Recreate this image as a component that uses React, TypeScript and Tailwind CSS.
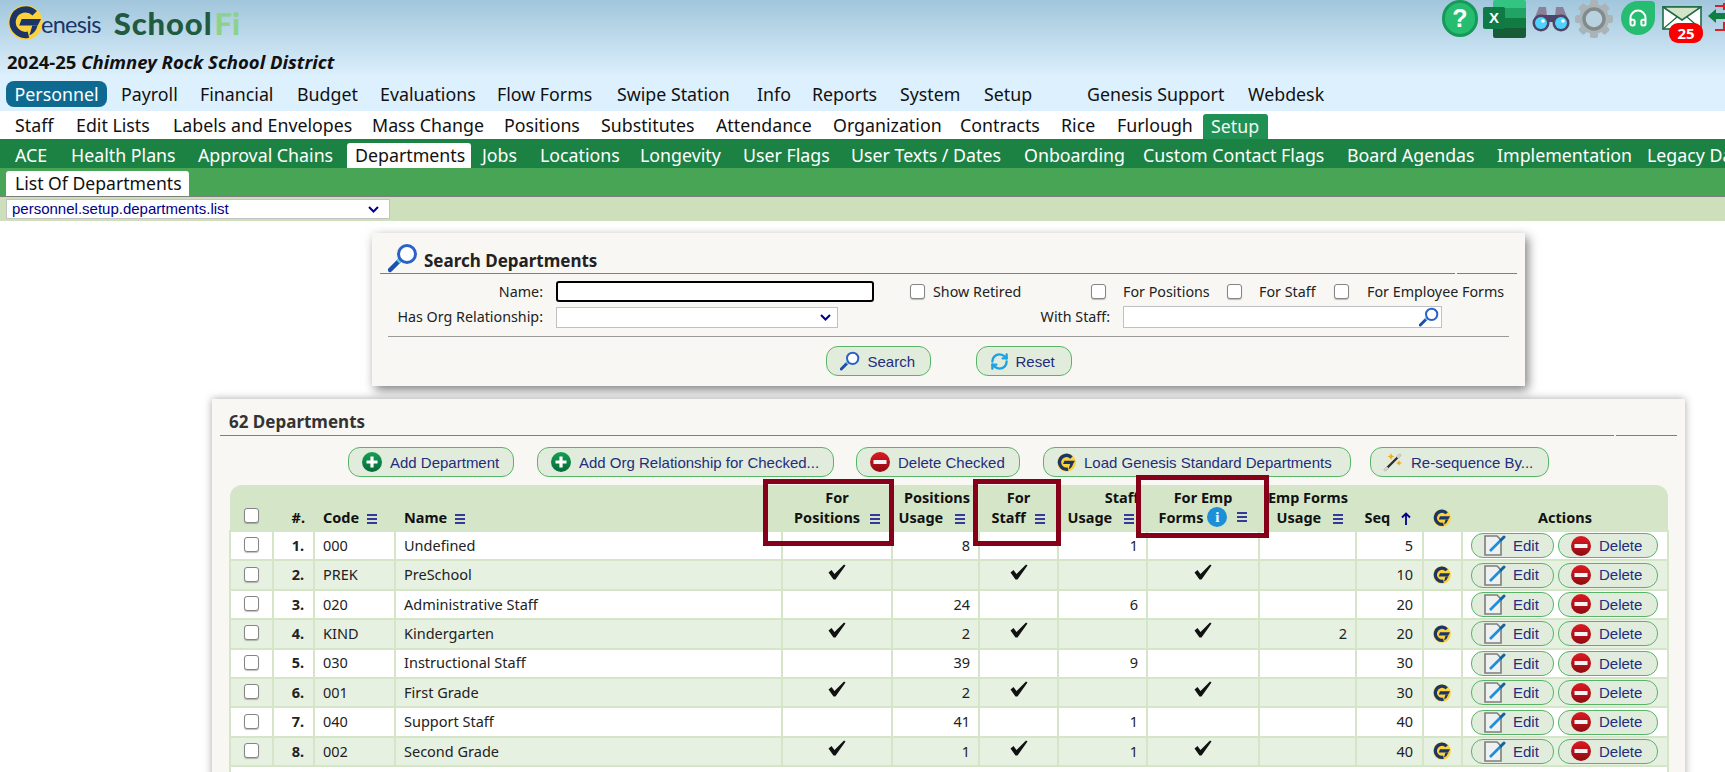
import React from "react";
import { Headphones, RefreshCw } from "lucide-react";

const mainNav = [
    { label: "Payroll", cls: "w-[79px]" },
    { label: "Financial", cls: "w-[97px]" },
    { label: "Budget", cls: "w-[83px]" },
    { label: "Evaluations", cls: "w-[117px]" },
    { label: "Flow Forms", cls: "w-[120px]" },
    { label: "Swipe Station", cls: "w-[140px]" },
    { label: "Info", cls: "w-[55px]" },
    { label: "Reports", cls: "w-[88px]" },
    { label: "System", cls: "w-[84px]" },
    { label: "Setup", cls: "w-[103px]" },
    { label: "Genesis Support", cls: "w-[161px]" },
    { label: "Webdesk", cls: "w-[90px]" },
];

const subNav = [
    { label: "Staff", cls: "w-[61px]" },
    { label: "Edit Lists", cls: "w-[97px]" },
    { label: "Labels and Envelopes", cls: "w-[199px]" },
    { label: "Mass Change", cls: "w-[132px]" },
    { label: "Positions", cls: "w-[97px]" },
    { label: "Substitutes", cls: "w-[115px]" },
    { label: "Attendance", cls: "w-[117px]" },
    { label: "Organization", cls: "w-[127px]" },
    { label: "Contracts", cls: "w-[101px]" },
    { label: "Rice", cls: "w-[56px]" },
    { label: "Furlough", cls: "w-[86px]" },
];

const setupNavLeft = [
    { label: "ACE", cls: "w-[56px]" },
    { label: "Health Plans", cls: "w-[127px]" },
    { label: "Approval Chains", cls: "w-[149px]" },
];

const setupNavRight = [
    { label: "Jobs", cls: "w-[58px]" },
    { label: "Locations", cls: "w-[100px]" },
    { label: "Longevity", cls: "w-[103px]" },
    { label: "User Flags", cls: "w-[108px]" },
    { label: "User Texts / Dates", cls: "w-[173px]" },
    { label: "Onboarding", cls: "w-[119px]" },
    { label: "Custom Contact Flags", cls: "w-[204px]" },
    { label: "Board Agendas", cls: "w-[150px]" },
    { label: "Implementation", cls: "w-[150px]" },
    { label: "Legacy Data", cls: "w-[100px]" },
];

const rows = [
    { n: "1.", code: "000", name: "Undefined", pos: "8", staff: "1", emp: "", seq: "5", std: false },
    { n: "2.", code: "PREK", name: "PreSchool", pos: "", staff: "", emp: "", seq: "10", std: true },
    { n: "3.", code: "020", name: "Administrative Staff", pos: "24", staff: "6", emp: "", seq: "20", std: false },
    { n: "4.", code: "KIND", name: "Kindergarten", pos: "2", staff: "", emp: "2", seq: "20", std: true },
    { n: "5.", code: "030", name: "Instructional Staff", pos: "39", staff: "9", emp: "", seq: "30", std: false },
    { n: "6.", code: "001", name: "First Grade", pos: "2", staff: "", emp: "", seq: "30", std: true },
    { n: "7.", code: "040", name: "Support Staff", pos: "41", staff: "1", emp: "", seq: "40", std: false },
    { n: "8.", code: "002", name: "Second Grade", pos: "1", staff: "1", emp: "", seq: "40", std: true },
];

const GLogo = ({ size }: { size: number }) => (
    <svg width={size} height={size} viewBox="0 0 36 36" className="shrink-0">
        <circle cx="18" cy="18" r="17.7" fill="#fbd13c" />
        <path d="M27.5 8.5 A13.2 13.2 0 1 0 21 30.5" fill="none" stroke="#1a3566" strokeWidth="6.4" />
        <path d="M14 14.5 H34 L30.5 21 H11.5 Z" fill="#1a3566" />
        <path d="M30.5 21 Q28.5 28.5 22 31 L25 21 Z" fill="#1a3566" />
    </svg>
);

const MagnifyIcon = ({ size }: { size: number }) => (
    <svg width={size} height={size} viewBox="0 0 30 30" className="shrink-0">
        <path d="M2 27 L11 18" stroke="#1d4fb0" strokeWidth="4.5" strokeLinecap="round" />
        <path d="M10 19 L13 16" stroke="#5fd0e0" strokeWidth="4" />
        <circle cx="19" cy="11" r="8.5" fill="#ffffff" stroke="#2a62c9" strokeWidth="3" />
    </svg>
);

const PlusIcon = () => (
    <svg width="20" height="20" viewBox="0 0 20 20" className="shrink-0">
        <defs>
            <linearGradient id="plusFill" x1="0" y1="0" x2="0" y2="1">
                <stop offset="0" stopColor="#14a052" />
                <stop offset="1" stopColor="#05693a" />
            </linearGradient>
        </defs>
        <circle cx="10" cy="10" r="10" fill="url(#plusFill)" />
        <path d="M10 4.5 V15.5 M4.5 10 H15.5" stroke="#ffffff" strokeWidth="3.2" />
    </svg>
);

const DeleteIcon = () => (
    <svg width="20" height="20" viewBox="0 0 20 20" className="shrink-0">
        <defs>
            <linearGradient id="deleteFill" x1="0" y1="0" x2="0" y2="1">
                <stop offset="0" stopColor="#dc1a22" />
                <stop offset="1" stopColor="#8f0a12" />
            </linearGradient>
        </defs>
        <circle cx="10" cy="10" r="10" fill="url(#deleteFill)" />
        <rect x="3.5" y="8" width="13" height="4" fill="#f3f3f3" />
    </svg>
);

const EditIcon = () => (
    <svg width="24" height="21" viewBox="0 0 24 21" className="shrink-0">
        <path d="M1 1 H13 L17 5 V20 H1 Z" fill="#eef1f0" stroke="#7d7d7d" strokeWidth="1.6" />
        <path d="M6 16 L17 5" stroke="#1b8fdc" strokeWidth="2.6" />
        <path d="M17 5 L20 2" stroke="#15639c" strokeWidth="3" strokeLinecap="round" />
    </svg>
);

const WandIcon = () => (
    <svg width="21" height="20" viewBox="0 0 21 20" className="shrink-0">
        <path d="M2 18 L17 3" stroke="#2e2e2e" strokeWidth="2.4" strokeLinecap="round" />
        <path d="M2 18 L4 16 M15 5 L17 3" stroke="#d8d8d8" strokeWidth="2.4" strokeLinecap="round" />
        <path d="M8 1 L9 3.5 L11.5 4.5 L9 5.5 L8 8 L7 5.5 L4.5 4.5 L7 3.5 Z" fill="#f6a821" />
        <path d="M16 8 L16.8 10 L19 11 L16.8 12 L16 14 L15.2 12 L13 11 L15.2 10 Z" fill="#f6a821" />
    </svg>
);

const MenuBars = () => (
    <svg width="10" height="10" viewBox="0 0 10 10" className="inline-block shrink-0 align-[-1px]">
        <path d="M0 1 H10 M0 5 H10 M0 9 H10" stroke="#00008b" strokeWidth="1.7" />
    </svg>
);

const SortArrow = () => (
    <svg width="10" height="13" viewBox="0 0 10 13" className="inline-block align-[-2px]">
        <path d="M5 13 V2 M1 5.5 L5 1.5 L9 5.5" fill="none" stroke="#00008b" strokeWidth="1.8" />
    </svg>
);

const Checkbox = () => (
    <input
        type="checkbox"
        className="appearance-none w-[15px] h-[15px] bg-white border border-[#858585] rounded-[3px] block shrink-0 shadow-[0_1px_1px_rgba(0,0,0,0.25)]"
    />
);

const Check = () => (
    <svg width="18" height="16" viewBox="0 0 18 16" className="inline-block align-[1px]">
        <path d="M0.5 8.5 L3.5 6 L6.5 10 L16 0.5 L17.5 1.5 L7.5 15.5 L5.5 15.5 Z" fill="#111" />
    </svg>
);

const ActionButton = ({ icon, label, cls }: { icon: React.ReactNode; label: string; cls: string }) => (
    <button
        className={`flex items-center h-[30px] bg-[#e2ecdc] border border-[#58b568] rounded-[12px] font-['Liberation_Sans',Arial,sans-serif] text-[15px] text-[#222d7c] whitespace-nowrap ${cls}`}
    >
        {icon}
        <span className="pt-[2px]">{label}</span>
    </button>
);

const RowButton = ({ icon, label, cls }: { icon: React.ReactNode; label: string; cls: string }) => (
    <button
        className={`flex items-center h-[25px] bg-[#e2ecdc] border border-[#58b568] rounded-[12px] font-['Liberation_Sans',Arial,sans-serif] text-[15px] text-[#222d7c] ${cls}`}
    >
        {icon}
        <span className="pt-[1px]">{label}</span>
    </button>
);

const TopIcons = () => (
    <div className="ml-auto w-[283px] h-[48px] flex items-start overflow-hidden shrink-0">
        <div className="w-[36px] h-[37px] rounded-full bg-[#27bd70] border-[3px] border-[#179a59] flex items-center justify-center text-white text-[25px] font-bold font-['Liberation_Sans',sans-serif] shrink-0">
            ?
        </div>
        <div className="relative ml-[5px] w-[44px] h-[38px] shrink-0">
            <div className="absolute left-[10px] top-0 w-[33px] h-[38px] rounded-[2px] overflow-hidden flex flex-col">
                <div className="h-[8px] bg-[#33c481]" />
                <div className="h-[10px] bg-[#21a366]" />
                <div className="h-[10px] bg-[#107c41]" />
                <div className="h-[10px] bg-[#185c37]" />
            </div>
            <div className="absolute left-0 top-[7px] w-[22px] h-[22px] rounded-[2px] bg-[#0f7a45] text-white text-[15px] font-bold flex items-center justify-center font-['Liberation_Sans',sans-serif]">
                X
            </div>
        </div>
        <svg width="40" height="26" viewBox="0 0 40 26" className="ml-[4px] mt-[6px] shrink-0">
            <path d="M8 1 H15 L16 10 H24 L25 1 H32 L38 16 H2 Z" fill="#8a8098" />
            <rect x="13" y="9" width="14" height="7" fill="#4d4566" />
            <circle cx="10" cy="17" r="8.5" fill="#4d4566" />
            <circle cx="30" cy="17" r="8.5" fill="#4d4566" />
            <circle cx="10" cy="17" r="6" fill="#4fd2ff" />
            <circle cx="30" cy="17" r="6" fill="#4fd2ff" />
            <circle cx="12" cy="15" r="1.8" fill="#ffffff" />
            <circle cx="32" cy="15" r="1.8" fill="#ffffff" />
        </svg>
        <svg width="40" height="38" viewBox="0 0 40 38" className="ml-[3px] shrink-0">
            <g fill="#aab4b8">
                <circle cx="20" cy="19" r="15" />
                <rect x="16" y="0" width="8" height="38" rx="2" />
                <rect x="1" y="15" width="38" height="8" rx="2" />
                <rect x="16" y="0" width="8" height="38" rx="2" transform="rotate(45 20 19)" />
                <rect x="16" y="0" width="8" height="38" rx="2" transform="rotate(-45 20 19)" />
            </g>
            <circle cx="20" cy="19" r="10" fill="#b9d2e0" />
            <circle cx="20" cy="19" r="10" fill="none" stroke="#84898a" strokeWidth="3.4" />
        </svg>
        <div className="ml-[7px] mt-[1px] w-[34px] h-[34px] bg-[#26bd73] rounded-[17px] rounded-tr-[4px] flex items-center justify-center shrink-0">
            <Headphones size={20} color="#ffffff" strokeWidth={2.4} />
        </div>
        <div className="relative ml-[7px] w-[41px] h-[44px] shrink-0">
            <svg width="40" height="24" viewBox="0 0 40 24" className="mt-[6px]">
                <rect x="1" y="1" width="38" height="22" fill="#ffffff" stroke="#1f6b46" strokeWidth="1.6" />
                <path d="M1 1 L20 14 L39 1 Z" fill="#d3e5c6" stroke="#1f6b46" strokeWidth="1.6" />
                <path d="M1 23 L15 11 M39 23 L25 11" stroke="#1f6b46" strokeWidth="1.2" />
            </svg>
            <div className="absolute left-[7px] top-[23px] w-[34px] h-[20px] bg-[#f80000] rounded-[9px] text-white text-[15px] font-bold leading-[20px] text-center">
                25
            </div>
        </div>
        <svg width="24" height="32" viewBox="0 0 24 32" className="ml-[4px] shrink-0">
            <path d="M8 6 H18 M8 30 H18 M17 3 V10 M17 22 V30" fill="none" stroke="#d9202a" strokeWidth="2" />
            <path d="M1 16 L9 9 V13 H20 V19 H9 V23 Z" fill="#0e7f41" />
        </svg>
    </div>
);

const Header = () => (
    <div>
        <div className="h-[111px] bg-linear-to-b from-[#a1c6db] to-[#ddf0fd] to-[70%] flex flex-col">
            <div className="h-[50px] flex items-start">
                <div className="flex items-center pl-[8px] pt-[5px]">
                    <GLogo size={35} />
                    <span className="text-[23.5px] text-[#1b3566] leading-none tracking-[-0.7px] ml-[-2px] mt-[5px] font-['Lato',sans-serif]">enesis</span>
                    <span className="ml-[13px] mt-[2px] text-[31px] font-black leading-none text-[#1f5a41] tracking-[0.9px] font-['Lato',sans-serif]">School</span>
                    <span className="ml-[2px] mt-[2px] text-[31px] font-black leading-none text-[#8bd28b] font-['Lato',sans-serif]">Fi</span>
                </div>
                <TopIcons />
            </div>
            <div className="h-[31px] pl-[7px] text-[18.5px] font-bold leading-[24px] text-[#111] whitespace-nowrap">
                2024-25 <span className="italic">Chimney Rock School District</span>
            </div>
            <div className="flex items-center pl-[6px] h-[26px] text-[17.8px] text-[#111] whitespace-nowrap">
                <div className="w-[101px] h-[26px] mr-[14px] bg-[#0f6a92] text-white rounded-[8px] flex items-center justify-center">
                    Personnel
                </div>
                {mainNav.map((item) => (
                    <div key={item.label} className={item.cls}>{item.label}</div>
                ))}
            </div>
        </div>
        <div className="h-[28px] bg-white flex items-end pl-[15px] text-[17.8px] text-[#111] whitespace-nowrap">
            {subNav.map((item) => (
                <div key={item.label} className={`${item.cls} h-[25px] leading-[25px] mb-[1px]`}>{item.label}</div>
            ))}
            <div className="w-[65px] h-[25px] pl-[8px] bg-[#1f9155] text-[#f2f8f2] rounded-t-[3px] leading-[25px]">Setup</div>
        </div>
        <div className="h-[29px] bg-[#1c8244] flex items-end pl-[15px] text-[17.8px] text-white whitespace-nowrap overflow-hidden">
            {setupNavLeft.map((item) => (
                <div key={item.label} className={`${item.cls} h-[25px] leading-[25px] shrink-0`}>{item.label}</div>
            ))}
            <div className="w-[124px] h-[25px] mr-[11px] pl-[8px] bg-white text-[#111] rounded-t-[3px] leading-[25px] shrink-0">Departments</div>
            {setupNavRight.map((item) => (
                <div key={item.label} className={`${item.cls} h-[25px] leading-[25px] shrink-0`}>{item.label}</div>
            ))}
        </div>
        <div className="h-[29px] bg-[#48a556] border-b border-[#7f7f7f] flex items-end pl-[6px]">
            <div className="w-[183px] h-[25px] pl-[9px] bg-white rounded-t-[3px] text-[17.6px] text-[#111] leading-[25px] whitespace-nowrap">List Of Departments</div>
        </div>
        <div className="h-[24px] bg-[#cddfbb] pl-[6px] pt-[2px]">
            <div className="w-[384px] h-[20px] bg-white border border-[#c3c3c3] flex items-center justify-between pl-[5px] pr-[10px] font-['Liberation_Sans',sans-serif] text-[15px] text-[#00008b]">
                <span className="pt-[1px]">personnel.setup.departments.list</span>
                <Chevron />
            </div>
        </div>
    </div>
);

const Chevron = () => (
    <svg width="11" height="7" viewBox="0 0 11 7" className="shrink-0">
        <path d="M1 1 L5.5 5.5 L10 1" fill="none" stroke="#00008b" strokeWidth="2" />
    </svg>
);

const SearchPanel = () => (
    <div className="ml-[372px] w-[1153px] h-[153px] bg-[#f8f7f3] shadow-[3px_4px_10px_rgba(0,0,0,0.5)] text-[14.3px] text-[#222]">
        <div className="flex pl-[8px] pr-[8px] h-[41px]">
            <div className="flex-1 flex items-end border-b border-[#7f7f7f] pl-[8px]">
                <MagnifyIcon size={30} />
                <span className="ml-[6px] mb-[1px] text-[17px] font-bold leading-[22px] text-[#222]">Search Departments</span>
            </div>
            <div className="w-[60px] ml-[2px] border-b border-[#7f7f7f]" />
        </div>
        <div className="flex items-center h-[21px] mt-[7px]">
            <div className="w-[171px] text-right">Name:</div>
            <div className="ml-[13px] w-[318px] h-[21px] bg-white border-2 border-black rounded-[3px]" />
            <div className="ml-[36px]"><Checkbox /></div>
            <span className="ml-[8px] w-[158px]">Show Retired</span>
            <Checkbox />
            <span className="ml-[17px] w-[104px]">For Positions</span>
            <Checkbox />
            <span className="ml-[17px] w-[75px]">For Staff</span>
            <Checkbox />
            <span className="ml-[18px] whitespace-nowrap">For Employee Forms</span>
        </div>
        <div className="flex items-center h-[22px] mt-[4px]">
            <div className="w-[171px] text-right">Has Org Relationship:</div>
            <div className="ml-[13px] w-[282px] h-[21px] bg-white border border-[#c0c0c0] flex items-center justify-end pr-[6px]">
                <Chevron />
            </div>
            <div className="w-[272px] text-right">With Staff:</div>
            <div className="ml-[13px] w-[319px] h-[22px] bg-white border border-[#c0c0c0] flex items-center justify-end pr-[2px]">
                <MagnifyIcon size={20} />
            </div>
        </div>
        <div className="mx-[16px] mt-[8px] border-t border-[#9a9a9a]" />
        <div className="flex justify-center mt-[9px]">
            <ActionButton icon={<span className="ml-[13px] mr-[8px]"><MagnifyIcon size={20} /></span>} label="Search" cls="w-[105px]" />
            <ActionButton
                icon={<RefreshCw size={19} color="#1ba3e3" strokeWidth={3} className="ml-[13px] mr-[7px]" />}
                label="Reset"
                cls="w-[96px] ml-[45px]"
            />
        </div>
    </div>
);

const Toolbar = () => (
    <div className="flex justify-center mt-[11px]">
        <ActionButton icon={<span className="ml-[13px] mr-[8px]"><PlusIcon /></span>} label="Add Department" cls="w-[166px]" />
        <ActionButton icon={<span className="ml-[13px] mr-[8px]"><PlusIcon /></span>} label="Add Org Relationship for Checked..." cls="w-[297px] ml-[23px]" />
        <ActionButton icon={<span className="ml-[13px] mr-[8px]"><DeleteIcon /></span>} label="Delete Checked" cls="w-[164px] ml-[22px]" />
        <ActionButton icon={<span className="ml-[13px] mr-[8px]"><GLogo size={19} /></span>} label="Load Genesis Standard Departments" cls="w-[308px] ml-[23px]" />
        <ActionButton icon={<span className="ml-[12px] mr-[7px]"><WandIcon /></span>} label="Re-sequence By..." cls="w-[179px] ml-[19px]" />
    </div>
);

const DeptTable = () => (
    <div className="relative ml-[17px] w-[1438px] mt-[8px]">
        <table className="table-fixed w-[1438px] border-collapse text-[14.5px] text-[#222]">
            <colgroup>
                <col className="w-[43px]" />
                <col className="w-[41px]" />
                <col className="w-[81px]" />
                <col className="w-[387px]" />
                <col className="w-[110px]" />
                <col className="w-[87px]" />
                <col className="w-[79px]" />
                <col className="w-[89px]" />
                <col className="w-[112px]" />
                <col className="w-[97px]" />
                <col className="w-[67px]" />
                <col className="w-[39px]" />
                <col className="w-[206px]" />
            </colgroup>
            <thead>
                <tr className="h-[46px] bg-[#d5e6c8] font-bold text-[#111] leading-[20px] align-bottom whitespace-nowrap">
                    <th className="pb-[7px] rounded-tl-[12px] pl-[14px]"><Checkbox /></th>
                    <th className="pb-[3px] text-right pr-[9px] font-bold">#.</th>
                    <th className="pb-[3px] text-left pl-[9px] font-bold">Code <span className="ml-[4px]"><MenuBars /></span></th>
                    <th className="pb-[3px] text-left pl-[9px] font-bold">Name <span className="ml-[4px]"><MenuBars /></span></th>
                    <th className="pb-[3px] text-center font-bold">For<br />Positions <span className="ml-[6px]"><MenuBars /></span></th>
                    <th className="pb-[3px] text-right pr-[9px] font-bold">Positions<br />Usage <span className="ml-[8px] mr-[5px]"><MenuBars /></span></th>
                    <th className="pb-[3px] text-center font-bold">For<br />Staff <span className="ml-[6px]"><MenuBars /></span></th>
                    <th className="pb-[3px] text-right pr-[8px] font-bold">Staff<br />Usage <span className="ml-[8px] mr-[5px]"><MenuBars /></span></th>
                    <th className="pb-[3px] text-center font-bold">
                        For Emp<br />
                        <span className="inline-flex items-center">
                            Forms
                            <span className="ml-[4px] mr-[10px] w-[20px] h-[20px] rounded-full bg-[#1d8fd8] text-white text-[15px] font-bold font-['Liberation_Serif',serif] flex items-center justify-center">i</span>
                            <MenuBars />
                        </span>
                    </th>
                    <th className="pb-[3px] text-right pr-[8px] font-bold">Emp Forms<br />Usage <span className="ml-[8px] mr-[5px]"><MenuBars /></span></th>
                    <th className="pb-[3px] text-right pr-[12px] font-bold">Seq <span className="ml-[7px]"><SortArrow /></span></th>
                    <th className="pb-[3px] pl-[10px]"><GLogo size={18} /></th>
                    <th className="pb-[3px] text-center rounded-tr-[12px] font-bold">Actions</th>
                </tr>
            </thead>
            <tbody>
                {rows.map((row, i) => (
                    <tr key={row.n} className={`h-[29.4px] ${i % 2 === 1 ? "bg-[#e7f1e2]" : "bg-white"}`}>
                        <td className="border-2 border-[#d5e6c8] pl-[13px]"><div className="-mt-[2px]"><Checkbox /></div></td>
                        <td className="border-2 border-[#d5e6c8] text-right pr-[9px] font-bold">{row.n}</td>
                        <td className="border-2 border-[#d5e6c8] pl-[8px]">{row.code}</td>
                        <td className="border-2 border-[#d5e6c8] pl-[8px]">{row.name}</td>
                        <td className="border-2 border-[#d5e6c8] text-center">{i % 2 === 1 && <Check />}</td>
                        <td className="border-2 border-[#d5e6c8] text-right pr-[8px]">{row.pos}</td>
                        <td className="border-2 border-[#d5e6c8] text-center">{i % 2 === 1 && <Check />}</td>
                        <td className="border-2 border-[#d5e6c8] text-right pr-[8px]">{row.staff}</td>
                        <td className="border-2 border-[#d5e6c8] text-center">{i % 2 === 1 && <Check />}</td>
                        <td className="border-2 border-[#d5e6c8] text-right pr-[8px]">{row.emp}</td>
                        <td className="border-2 border-[#d5e6c8] text-right pr-[9px]">{row.seq}</td>
                        <td className="border-2 border-[#d5e6c8] pl-[9px]">{row.std && <GLogo size={18} />}</td>
                        <td className="border-2 border-[#d5e6c8]">
                            <div className="flex pl-[8px] gap-[4px]">
                                <RowButton icon={<span className="ml-[12px] mr-[5px]"><EditIcon /></span>} label="Edit" cls="w-[83px]" />
                                <RowButton icon={<span className="ml-[12px] mr-[8px]"><DeleteIcon /></span>} label="Delete" cls="w-[100px]" />
                            </div>
                        </td>
                    </tr>
                ))}
                <tr className="h-[29.4px] bg-white">
                    <td className="border-2 border-[#d5e6c8]" colSpan={13} />
                </tr>
            </tbody>
        </table>
        <div className="absolute left-[534px] top-[-6px] w-[131px] h-[67px] border-[5px] border-[#850018]" />
        <div className="absolute left-[744px] top-[-6px] w-[88px] h-[67px] border-[5px] border-[#850018]" />
        <div className="absolute left-[907px] top-[-10px] w-[133px] h-[63px] border-[5px] border-[#850018]" />
    </div>
);

const ListPanel = () => (
    <div className="ml-[212px] mt-[13px] w-[1473px] h-[400px] bg-[#f8f7f3] shadow-[0_0_8px_rgba(0,0,0,0.35)]">
        <div className="flex pl-[8px] pr-[8px] h-[37px]">
            <div className="flex-1 flex items-end border-b border-[#7f7f7f] pl-[9px]">
                <span className="mb-[2px] text-[17px] font-bold leading-[22px] text-[#333]">62 Departments</span>
            </div>
            <div className="w-[61px] ml-[2px] border-b border-[#7f7f7f]" />
        </div>
        <Toolbar />
        <DeptTable />
    </div>
);

export default function App() {
    return (
        <div className="w-[1725px] h-[772px] overflow-hidden bg-white font-['Noto_Sans','Lato',sans-serif]">
            <Header />
            <div className="pt-[12px]">
                <SearchPanel />
                <ListPanel />
            </div>
        </div>
    );
}
